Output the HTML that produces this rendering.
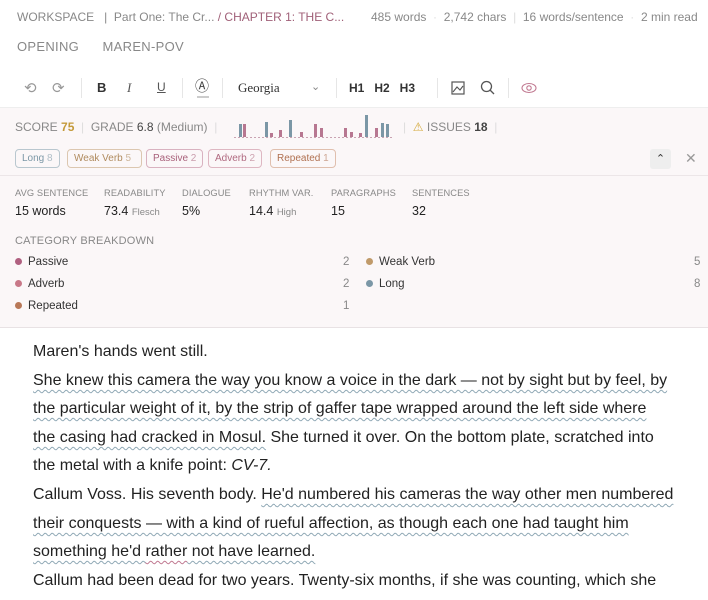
<!DOCTYPE html>
<html><head><meta charset="utf-8"><style>
*{margin:0;padding:0;box-sizing:border-box}
body{width:708px;height:600px;overflow:hidden;background:#fff;font-family:"Liberation Sans",sans-serif;color:#333;position:relative}
.a{position:absolute;white-space:nowrap}
.g{color:#888}
.pill{position:absolute;top:149px;height:19px;border:1px solid;border-radius:4px;font-size:10px;line-height:17px;padding:0 6px}
.lbl{font-size:9.3px;color:#888;letter-spacing:.1px}
.val{font-size:12.5px;color:#222}
.val small{font-size:9.5px;color:#888}
.dot{display:inline-block;width:7px;height:7px;border-radius:50%;margin-right:6px;vertical-align:0}
.cat{font-size:11.5px;color:#333}
.txt{position:absolute;left:33px;font-size:16px;color:#222;letter-spacing:0;white-space:nowrap}
.w{text-decoration:underline wavy #8fa8b5;text-decoration-thickness:1px;text-underline-offset:4px}
.wp{text-decoration:underline wavy #c07890;text-decoration-thickness:1px;text-underline-offset:4px}
</style></head><body>
<div class="a g" style="left:17px;top:10px;font-size:12px">WORKSPACE &nbsp;&nbsp;| &nbsp;Part One: The Cr... <span style="color:#a06078">/ CHAPTER 1: THE C...</span></div>
<div class="a g" style="left:371px;top:10px;font-size:12px">485 words <span style="color:#ddd">&nbsp;·&nbsp;</span> 2,742 chars <span style="color:#ddd">&nbsp;|&nbsp;</span> 16 words/sentence <span style="color:#ddd">&nbsp;·&nbsp;</span> 2 min read</div>
<div class="a g" style="left:17px;top:39px;font-size:13px;letter-spacing:.3px">OPENING &nbsp;&nbsp;&nbsp;&nbsp;&nbsp;MAREN-POV</div>
<!-- toolbar -->
<div class="a" style="left:24px;top:79px;font-size:15px;color:#999">&#x27F2;</div>
<div class="a" style="left:52px;top:79px;font-size:15px;color:#999">&#x27F3;</div>
<div class="a" style="left:81px;top:78px;width:1px;height:20px;background:#e6e6e6"></div>
<div class="a" style="left:97px;top:80px;font-size:13px;font-weight:bold;color:#333">B</div>
<div class="a" style="left:127px;top:80px;font-size:13px;font-style:italic;color:#555;font-family:'Liberation Serif',serif">I</div>
<div class="a" style="left:157px;top:80px;font-size:12px;text-decoration:underline;color:#555">U</div>
<div class="a" style="left:182px;top:78px;width:1px;height:20px;background:#e6e6e6"></div>
<div class="a" style="left:195px;top:76px;font-size:14px;color:#444">&#x24B6;</div>
<div class="a" style="left:197px;top:96px;width:12px;height:2px;background:#ccc"></div>
<div class="a" style="left:222px;top:78px;width:1px;height:20px;background:#e6e6e6"></div>
<div class="a" style="left:238px;top:80px;font-size:13px;font-family:'Liberation Serif',serif;color:#333">Georgia</div>
<div class="a" style="left:311px;top:80px;font-size:11px;color:#888">&#x2304;</div>
<div class="a" style="left:336px;top:78px;width:1px;height:20px;background:#e6e6e6"></div>
<div class="a" style="left:349px;top:81px;font-size:12px;font-weight:bold;color:#333">H1 &nbsp;&nbsp;H2 &nbsp;&nbsp;H3</div>
<div class="a" style="left:437px;top:78px;width:1px;height:20px;background:#e6e6e6"></div>
<svg class="a" style="left:451px;top:81px" width="14" height="14"><rect x="1" y="1" width="12" height="12" fill="none" stroke="#555" stroke-width="1.2"/><path d="M2 11 L6 6 L9 9 L12 5" fill="none" stroke="#555" stroke-width="1.1"/></svg>
<svg class="a" style="left:480px;top:80px" width="16" height="16"><circle cx="6.5" cy="6.5" r="5" fill="none" stroke="#555" stroke-width="1.3"/><path d="M10 10 L14 14" stroke="#555" stroke-width="1.3"/></svg>
<div class="a" style="left:508px;top:78px;width:1px;height:20px;background:#e6e6e6"></div>
<svg class="a" style="left:521px;top:82px" width="16" height="12"><ellipse cx="8" cy="6" rx="7" ry="4.5" fill="none" stroke="#c07890" stroke-width="1.1"/><circle cx="8" cy="6" r="2.2" fill="none" stroke="#c07890" stroke-width="1.1"/></svg>
<!-- panel -->
<div class="a" style="left:0;top:107px;width:708px;height:221px;background:#fbf7f8;border-top:1px solid #eee;border-bottom:1px solid #e8e2e4"></div>
<div class="a" style="left:15px;top:120px;font-size:12px;color:#888">SCORE <b style="color:#c49a3a">75</b> <span style="color:#ddd">&nbsp;|&nbsp;</span> GRADE <span style="color:#444">6.8</span> (Medium) <span style="color:#ddd">&nbsp;|</span></div>
<svg class="a" style="left:232px;top:112px" width="162" height="28">
<line x1="2" y1="25.5" x2="160" y2="25.5" stroke="#c9a3b2" stroke-dasharray="2 2"/>
<g fill="#7b97a6"><rect x="7" y="12" width="3" height="13"/><rect x="33" y="10" width="3" height="15"/><rect x="57" y="8" width="3" height="17"/><rect x="133" y="3" width="3" height="22"/><rect x="149" y="11" width="3" height="14"/><rect x="154" y="12" width="3" height="13"/></g>
<g fill="#b77791"><rect x="11" y="12" width="3" height="13"/><rect x="38" y="21" width="3" height="4"/><rect x="47" y="18" width="3" height="7"/><rect x="68" y="20" width="3" height="5"/><rect x="82" y="12" width="3" height="13"/><rect x="88" y="16" width="3" height="9"/><rect x="112" y="16" width="3" height="9"/><rect x="118" y="20" width="3" height="5"/><rect x="127" y="21" width="3" height="4"/><rect x="143" y="16" width="3" height="9"/></g>
</svg>
<div class="a" style="left:403px;top:120px;font-size:12px;color:#888"><span style="color:#ddd">|&nbsp;</span> <span style="color:#d4a93a">&#x26A0;</span> ISSUES <b style="color:#444">18</b> <span style="color:#ddd">&nbsp;|</span></div>
<div class="pill" style="left:15px;color:#7b97a6;border-color:#b9c7cf">Long <span style="opacity:.6">8</span></div>
<div class="pill" style="left:67px;width:75px;color:#b08b5e;border-color:#dcc7b0">Weak Verb <span style="opacity:.6">5</span></div>
<div class="pill" style="left:146px;color:#a8607a;border-color:#d9b2c0">Passive <span style="opacity:.6">2</span></div>
<div class="pill" style="left:208px;color:#b06a80;border-color:#deb7c2">Adverb <span style="opacity:.6">2</span></div>
<div class="pill" style="left:270px;color:#b07050;border-color:#e0bfae">Repeated <span style="opacity:.6">1</span></div>
<div class="a" style="left:650px;top:149px;width:21px;height:20px;background:#eee;border-radius:3px;text-align:center;font-size:11px;line-height:20px;color:#333">&#x2303;</div>
<div class="a" style="left:685px;top:150px;font-size:14px;color:#999">&#x2715;</div>
<div class="a" style="left:0;top:175px;width:708px;height:1px;background:#ece6e8"></div>
<div class="a lbl" style="left:15px;top:188px">AVG SENTENCE</div><div class="a val" style="left:15px;top:204px">15 words</div>
<div class="a lbl" style="left:104px;top:188px">READABILITY</div><div class="a val" style="left:104px;top:204px">73.4 <small>Flesch</small></div>
<div class="a lbl" style="left:182px;top:188px">DIALOGUE</div><div class="a val" style="left:182px;top:204px">5%</div>
<div class="a lbl" style="left:249px;top:188px">RHYTHM VAR.</div><div class="a val" style="left:249px;top:204px">14.4 <small>High</small></div>
<div class="a lbl" style="left:331px;top:188px">PARAGRAPHS</div><div class="a val" style="left:331px;top:204px">15</div>
<div class="a lbl" style="left:412px;top:188px">SENTENCES</div><div class="a val" style="left:412px;top:204px">32</div>
<div class="a" style="left:15px;top:235px;font-size:11px;color:#888;letter-spacing:.2px">CATEGORY BREAKDOWN</div>
<div class="a cat" style="left:15px;top:256px"><span class="dot" style="background:#b06080"></span>Passive</div>
<div class="a cat" style="left:15px;top:278px"><span class="dot" style="background:#c87888"></span>Adverb</div>
<div class="a cat" style="left:15px;top:300px"><span class="dot" style="background:#b87858"></span>Repeated</div>
<div class="a g" style="left:343px;top:256px;font-size:11.5px">2</div>
<div class="a g" style="left:343px;top:278px;font-size:11.5px">2</div>
<div class="a g" style="left:343px;top:300px;font-size:11.5px">1</div>
<div class="a cat" style="left:366px;top:256px"><span class="dot" style="background:#c09a6a"></span>Weak Verb</div>
<div class="a cat" style="left:366px;top:278px"><span class="dot" style="background:#7b97a6"></span>Long</div>
<div class="a g" style="left:694px;top:256px;font-size:11.5px">5</div>
<div class="a g" style="left:694px;top:278px;font-size:11.5px">8</div>
<!-- text -->
<div class="txt" style="top:343px">Maren's hands went still.</div>
<div class="txt" style="top:372px"><span class="w">She knew this camera the way you know a voice in the dark — not by sight but by feel, by</span></div>
<div class="txt" style="top:400px"><span class="w">the particular weight of it, by the strip of gaffer tape wrapped around the left side where</span></div>
<div class="txt" style="top:429px"><span class="w">the casing had cracked in Mosul.</span> She turned it over. On the bottom plate, scratched into</div>
<div class="txt" style="top:457px">the metal with a knife point: <i>CV-7.</i></div>
<div class="txt" style="top:486px">Callum Voss. His seventh body. <span class="w">He'd numbered his cameras the way other men numbered</span></div>
<div class="txt" style="top:515px"><span class="w">their conquests — with a kind of rueful affection, as though each one had taught him</span></div>
<div class="txt" style="top:543px"><span class="w">something he'd </span><span class="wp">rather</span><span class="w"> not have learned.</span></div>
<div class="txt" style="top:572px">Callum had been dead for two years. Twenty-six months, if she was counting, which she</div>
</body></html>
